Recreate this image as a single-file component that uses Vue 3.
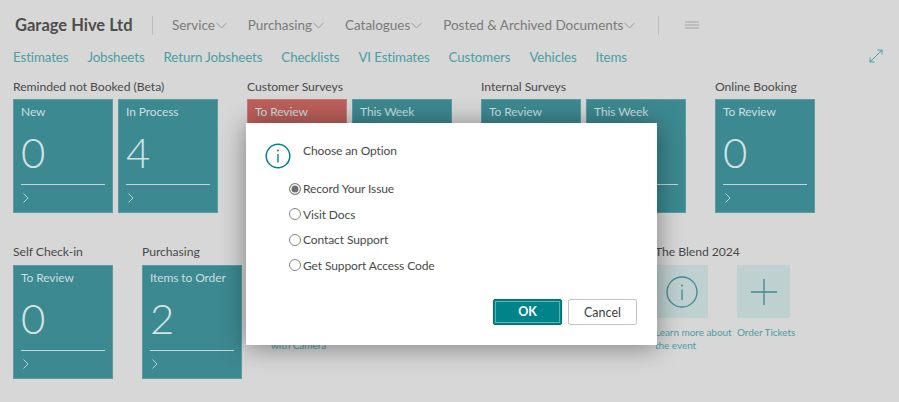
<template>
  <div class="page">
    <header class="topbar">
      <span class="company">Garage Hive Ltd</span>
      <span class="sep"></span>
      <nav class="menu">
        <span v-for="m in menus" :key="m" class="menu-item">
          {{ m }}
          <svg width="11" height="7" viewBox="0 0 11 7"><path d="M.5.8 5.500 6 10.500.8" fill="none" stroke="#9a9a9a" /></svg>
        </span>
      </nav>
      <span class="sep"></span>
      <svg class="burger" width="14" height="8" viewBox="0 0 14 8"><path d="M0 1h14M0 4h14M0 7h14" stroke="#a3a3a3" /></svg>
    </header>

    <div class="links">
      <a v-for="l in links" :key="l">{{ l }}</a>
      <svg class="expand" width="14" height="14" viewBox="0 0 14 14">
        <path d="M1 13 13 1M8.500 1H13V5.500M1 8.500V13H5.500" fill="none" stroke="#4b9ea3" />
      </svg>
    </div>

    <section class="row">
      <div v-for="g in rowOne" :key="g.title" class="group">
        <h3>{{ g.title }}</h3>
        <div class="tiles">
          <div v-for="t in g.tiles" :key="t.label" class="tile" :class="{ red: t.red }">
            <span class="tile-label">{{ t.label }}</span>
            <span class="tile-value">{{ t.value }}</span>
            <span class="tile-line"></span>
            <svg class="tile-arrow" width="6" height="10" viewBox="0 0 6 10"><path d="M.5.5 5 5 .5 9.500" fill="none" stroke="#b9d3d5" /></svg>
          </div>
        </div>
      </div>
    </section>

    <section class="row row-two">
      <div v-for="g in rowTwo" :key="g.title" class="group">
        <h3>{{ g.title }}</h3>
        <div class="tiles">
          <div v-for="t in g.tiles" :key="t.label" class="tile">
            <span class="tile-label">{{ t.label }}</span>
            <span class="tile-value">{{ t.value }}</span>
            <span class="tile-line"></span>
            <svg class="tile-arrow" width="6" height="10" viewBox="0 0 6 10"><path d="M.5.5 5 5 .5 9.500" fill="none" stroke="#b9d3d5" /></svg>
          </div>
        </div>
      </div>

      <!-- mostly sits behind the dialog, only the last label line shows -->
      <div class="group camera">
        <h3>&nbsp;</h3>
        <div class="action">
          <div class="action-box"></div>
          <span class="action-text">Scan Vehicle<br />with Camera</span>
        </div>
      </div>

      <div class="group">
        <h3>The Blend 2024</h3>
        <div class="actions">
          <div class="action">
            <div class="action-box">
              <svg width="32" height="32" viewBox="0 0 32 32">
                <circle cx="16" cy="16" r="15" fill="none" stroke="#40898f" stroke-width="1.300" />
                <path d="M16 13.500V24" stroke="#40898f" stroke-width="1.300" />
                <circle cx="16" cy="9.500" r="1" fill="#40898f" />
              </svg>
            </div>
            <span class="action-text">Learn more about<br />the event</span>
          </div>
          <div class="action">
            <div class="action-box">
              <svg width="26" height="26" viewBox="0 0 26 26"><path d="M13 0v26M0 13h26" stroke="#40898f" stroke-width="1.300" /></svg>
            </div>
            <span class="action-text">Order Tickets</span>
          </div>
        </div>
      </div>
    </section>

    <div class="dialog">
      <div class="dialog-head">
        <svg width="26" height="26" viewBox="0 0 26 26">
          <circle cx="13" cy="13" r="11.800" fill="none" stroke="#008489" stroke-width="1.500" />
          <path d="M13 11v8.500" stroke="#008489" stroke-width="1.400" />
          <circle cx="13" cy="7.500" r="1" fill="#008489" />
        </svg>
        <span class="dialog-title">Choose an Option</span>
      </div>
      <div class="options">
        <label v-for="(o, i) in options" :key="o" class="option">
          <span class="radio" :class="{ on: i === selected }"></span>
          {{ o }}
        </label>
      </div>
      <div class="buttons">
        <button class="btn primary"><span>OK</span></button>
        <button class="btn">Cancel</button>
      </div>
    </div>
  </div>
</template>

<script setup>
const selected = 0

const menus = ['Service', 'Purchasing', 'Catalogues', 'Posted & Archived Documents']
const links = ['Estimates', 'Jobsheets', 'Return Jobsheets', 'Checklists', 'VI Estimates', 'Customers', 'Vehicles', 'Items']
const options = ['Record Your Issue', 'Visit Docs', 'Contact Support', 'Get Support Access Code']

const rowOne = [
  { title: 'Reminded not Booked (Beta)', tiles: [{ label: 'New', value: 0 }, { label: 'In Process', value: 4 }] },
  { title: 'Customer Surveys', tiles: [{ label: 'To Review', value: 0, red: true }, { label: 'This Week', value: 0 }] },
  { title: 'Internal Surveys', tiles: [{ label: 'To Review', value: 0 }, { label: 'This Week', value: 0 }] },
  { title: 'Online Booking', tiles: [{ label: 'To Review', value: 0 }] },
]

const rowTwo = [
  { title: 'Self Check-in', tiles: [{ label: 'To Review', value: 0 }] },
  { title: 'Purchasing', tiles: [{ label: 'Items to Order', value: 2 }] },
]
</script>

<style>
html, body {
  margin: 0;
  background: #d7d7d7;
  overflow: hidden;
}
</style>

<style scoped>
.page {
  position: relative;
  width: 899px;
  height: 402px;
  overflow: hidden;
  background: #d7d7d7;
  font-family: Lato, "Open Sans", sans-serif;
  color: #4f4f4f;
}

.topbar {
  display: flex;
  align-items: center;
  height: 24px;
  padding: 13px 0 0 15px;
}

.company {
  width: 137px;
  font-size: 16.500px;
  font-weight: 700;
  color: #4d4d4d;
  white-space: nowrap;
}

.sep {
  width: 1px;
  height: 19px;
  background: #bdbdbd;
}

.menu {
  display: flex;
  width: 486px;
  margin-left: 19px;
}

.menu-item {
  display: flex;
  align-items: center;
  gap: 1px;
  margin-right: 21px;
  font-size: 13.500px;
  letter-spacing: -0.03px;
  color: #7b7b7b;
  white-space: nowrap;
}

.burger {
  margin-left: 26px;
}

.links {
  display: flex;
  align-items: center;
  gap: 19px;
  padding: 12px 16px 0 13px;
  font-size: 13.300px;
  letter-spacing: -0.1px;
  color: #4b9ea3;
  white-space: nowrap;
}

.expand {
  margin-left: auto;
  margin-top: -3px;
}

.row {
  display: flex;
  gap: 29px;
  padding: 14px 0 0 13px;
}

.row-two {
  padding-top: 31px;
}

.group h3 {
  margin: 0 0 4px;
  font-size: 12.200px;
  line-height: 16px;
  font-weight: 400;
  letter-spacing: -0.05px;
  color: #4a4a4a;
  white-space: nowrap;
}

.row-two .group h3 {
  margin-bottom: 5px;
}

.tiles {
  display: flex;
  gap: 5px;
}

.tile {
  display: flex;
  flex-direction: column;
  box-sizing: border-box;
  width: 100px;
  height: 114px;
  padding: 4px 7px 0;
  background: #3d8991;
  border: 1px solid #5b9ba1;
}

.tile.red {
  background: #bc5f5a;
  border-color: #c77a75;
}

.tile-label {
  font-size: 12px;
  line-height: 16px;
  letter-spacing: -0.1px;
  color: #c9dfe0;
  white-space: nowrap;
}

.tile-value {
  margin-top: 4px;
  font-size: 42px;
  line-height: 56px;
  font-weight: 300;
  color: #d3e3e4;
}

.tile-line {
  height: 1px;
  margin-top: 4px;
  background: #c4d6d7;
}

.tile-arrow {
  margin-top: 8px;
  margin-left: 2px;
}

.camera {
  width: 355px;
}

.actions {
  display: flex;
  gap: 29px;
}

.action {
  display: flex;
  flex-direction: column;
  width: 53px;
}

.action-box {
  display: flex;
  align-items: center;
  justify-content: center;
  width: 53px;
  height: 53px;
  background: #bfd0d1;
}

.action-text {
  margin-top: 8px;
  font-size: 10px;
  line-height: 13px;
  letter-spacing: -0.05px;
  color: #4b9ea3;
  white-space: nowrap;
}

.dialog {
  position: absolute;
  left: 246px;
  top: 123px;
  box-sizing: border-box;
  width: 411px;
  height: 222px;
  padding: 20px 20px 0;
  background: #fff;
  box-shadow: 0 2px 24px rgba(0, 0, 0, 0.42);
}

.dialog-head {
  display: flex;
  align-items: flex-start;
  gap: 12px;
  margin-left: -1px;
}

.dialog-title {
  font-size: 12px;
  line-height: 16px;
  letter-spacing: -0.1px;
  color: #4a4a4a;
}

.options {
  display: flex;
  flex-direction: column;
  gap: 5.500px;
  margin: 9.500px 0 0 22.500px;
}

.option {
  display: flex;
  align-items: center;
  gap: 2.500px;
  height: 20px;
  font-size: 12px;
  letter-spacing: -0.1px;
  color: #4a4a4a;
  white-space: nowrap;
}

.radio {
  display: block;
  box-sizing: border-box;
  width: 12px;
  height: 12px;
  border: 1px solid #858585;
  border-radius: 50%;
}

.radio.on {
  background: #6e6e6e;
  box-shadow: inset 0 0 0 1.500px #fff;
}

.buttons {
  position: absolute;
  right: 20px;
  bottom: 20px;
  display: flex;
  gap: 6px;
}

.btn {
  box-sizing: border-box;
  width: 69px;
  height: 26px;
  padding: 0;
  background: #fff;
  border: 1px solid #c4c4c4;
  border-radius: 2px;
  font-family: inherit;
  font-size: 12.500px;
  color: #3d3d3d;
}

.btn.primary {
  padding: 1px;
  background: #008489;
  border-color: #006d71;
  color: #fff;
  font-weight: 700;
}

.btn.primary span {
  display: block;
  line-height: 20px;
  border: 1px solid #5fb0b3;
}
</style>
